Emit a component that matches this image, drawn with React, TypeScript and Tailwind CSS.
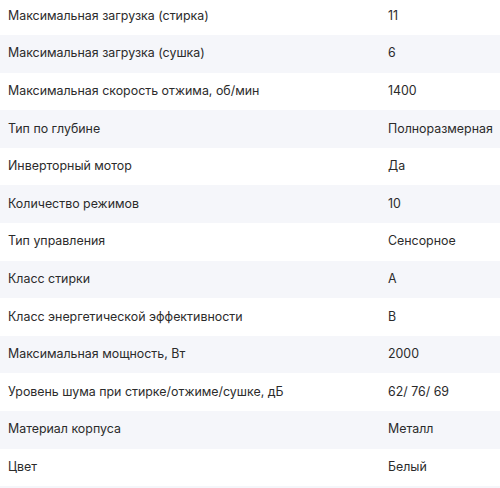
const SPECS: [string, string][] = [
  ["Максимальная загрузка (стирка)", "11"],
  ["Максимальная загрузка (сушка)", "6"],
  ["Максимальная скорость отжима, об/мин", "1400"],
  ["Тип по глубине", "Полноразмерная"],
  ["Инверторный мотор", "Да"],
  ["Количество режимов", "10"],
  ["Тип управления", "Сенсорное"],
  ["Класс стирки", "A"],
  ["Класс энергетической эффективности", "B"],
  ["Максимальная мощность, Вт", "2000"],
  ["Уровень шума при стирке/отжиме/сушке, дБ", "62/ 76/ 69"],
  ["Материал корпуса", "Металл"],
  ["Цвет", "Белый"],
]

export default function App() {
  return (
    <div className="w-[500px] h-[488px] overflow-hidden bg-white font-['Inter','Noto_Sans',sans-serif] text-[12.4px] text-[#2b2b2b]">
      <div className="-mt-[2.6px]">
        {SPECS.map(([label, value], i) => (
          <div
            key={label}
            className={`flex items-center h-[37.6px] ${i % 2 === 1 ? "bg-[#f5f6fa]" : "bg-white"}`}
          >
            <div className="w-[388px] pl-2 truncate">{label}</div>
            <div className="flex-1 whitespace-nowrap">{value}</div>
          </div>
        ))}
        {/* next row, cut off by the bottom edge */}
        <div className="h-[37.6px] bg-[#f5f6fa]" />
      </div>
    </div>
  )
}
